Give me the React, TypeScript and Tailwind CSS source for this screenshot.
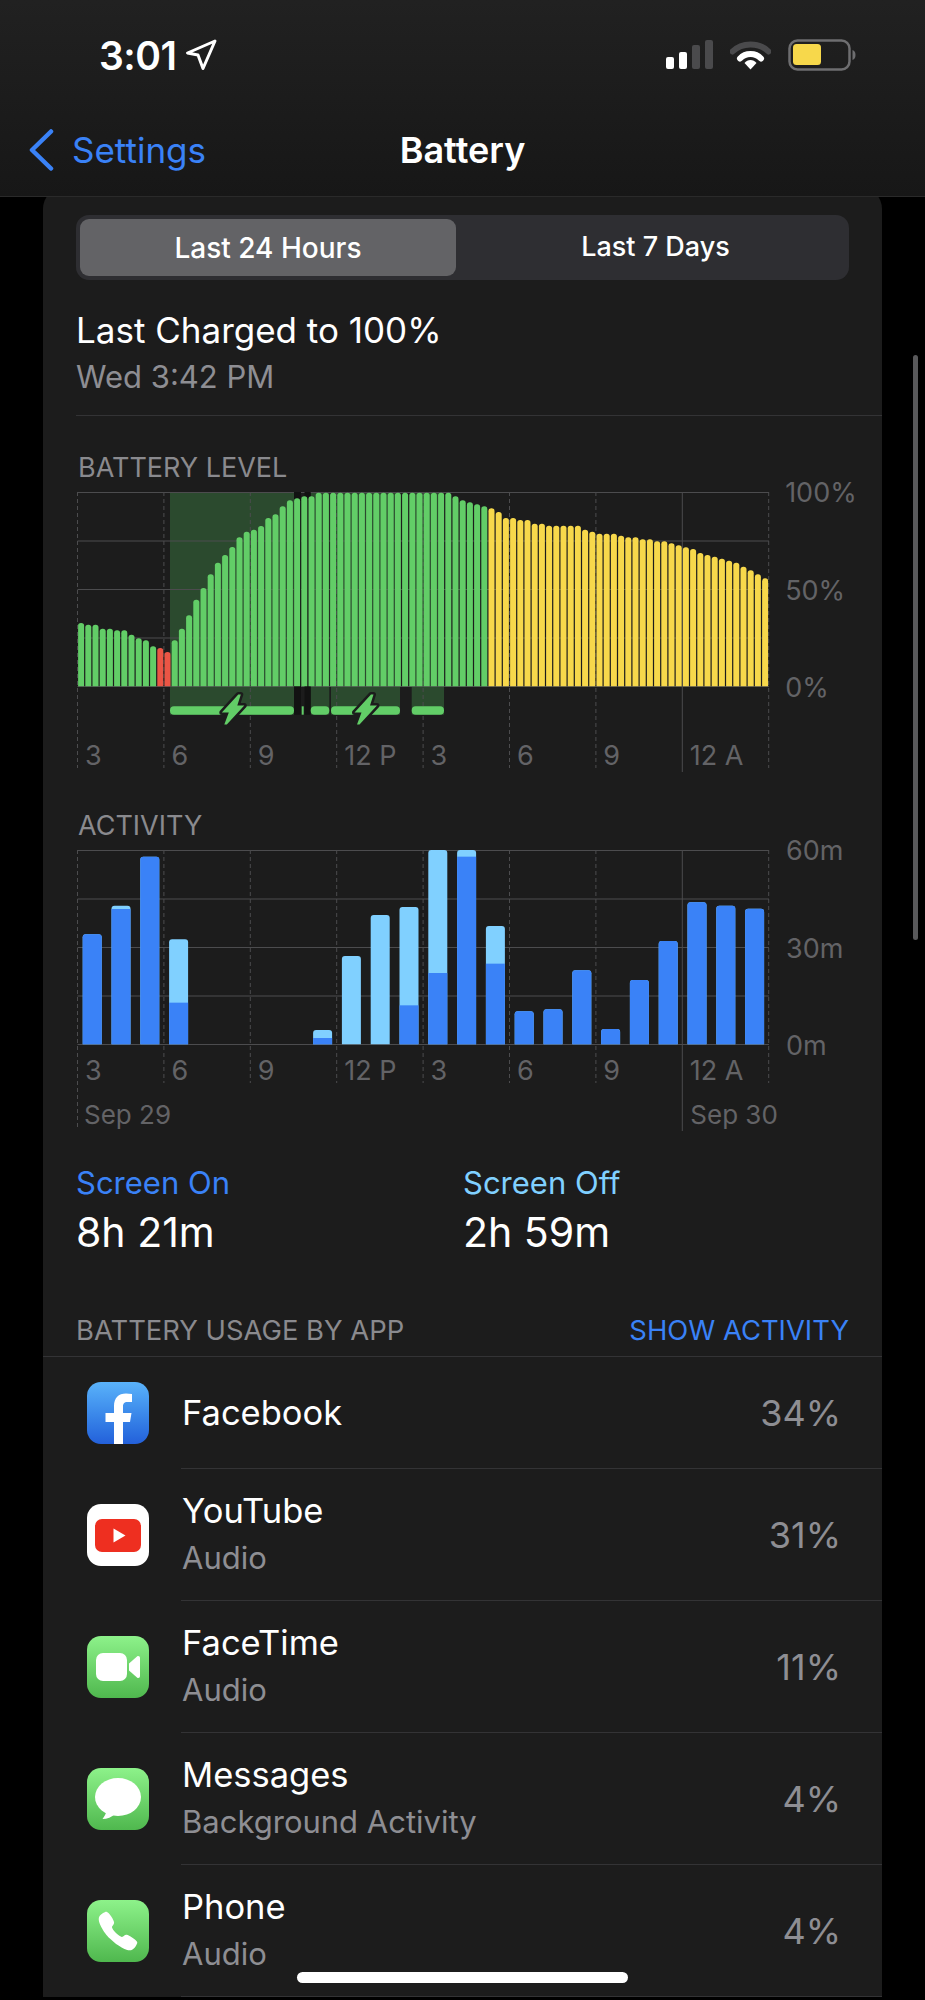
import { IoCall } from 'react-icons/io5';

const BATTERY_TOPS = [
  520, 525, 525, 537, 537, 542, 542, 555, 566, 572, 590, 595, 607, 572, 537, 497, 450, 415, 374, 339,
  316, 292, 263, 246, 240, 229, 205, 194, 170, 152, 146, 140, 140, 129, 129, 129, 129, 129, 129, 129,
  129, 129, 129, 129, 129, 129, 129, 129, 129, 129, 129, 129, 140, 152, 158, 164, 170, 176, 187, 205,
  205, 211, 211, 222, 222, 228, 228, 228, 228, 228, 240, 246, 252, 252, 252, 258, 263, 263, 269, 269,
  275, 275, 281, 287, 293, 298, 310, 316, 321, 327, 333, 339, 351, 362, 374, 386,
];

// [top of the bar, where the dark part starts], read off the chart
const ACTIVITY_BARS: ([number, number] | null)[] = [
  [373, 373], [287, 297], [140, 140], [388, 578], null, null, null, null, [660, 684], [438, 703], [315, 703], [291, 586],
  [120, 489], [120, 140], [348, 461], [604, 604], [598, 598], [481, 481], [657, 657], [510, 510], [393, 393], [277, 277], [287, 287], [296, 296],
];

const HOURS = ['3', '6', '9', '12 P', '3', '6', '9', '12 A'];
const SHADES = [[93, 217], [233.7, 252.3], [254, 323], [334.7, 367]];
const GRID_Y = [0.5, 49, 97.5, 146, 194.5];

const APPS = [
  { name: 'Facebook', pct: '34%', icon: <FacebookIcon /> },
  { name: 'YouTube', sub: 'Audio', pct: '31%', icon: <YouTubeIcon /> },
  { name: 'FaceTime', sub: 'Audio', pct: '11%', icon: <FaceTimeIcon /> },
  { name: 'Messages', sub: 'Background Activity', pct: '4%', icon: <MessagesIcon /> },
  { name: 'Phone', sub: 'Audio', pct: '4%', icon: <PhoneIcon /> },
];

function topRounded(x: number, w: number, top: number, base: number, r: number) {
  return `M${x} ${base}V${top + r}Q${x} ${top} ${x + r} ${top}H${x + w - r}Q${x + w} ${top} ${x + w} ${top + r}V${base}Z`;
}

function Grid({ dashTo, firstTo, solidTo }: { dashTo: number; firstTo: number; solidTo: number }) {
  return (
    <>
      {GRID_Y.map((y) => (
        <line key={y} x1="0.5" x2="692" y1={y} y2={y} stroke="#4c4c4e" strokeWidth="1" />
      ))}
      {[0, 1, 2, 3, 4, 5, 6, 7, 8].map((i) => (
        <line
          key={i}
          x1={0.5 + 86.4 * i}
          x2={0.5 + 86.4 * i}
          y1="0"
          y2={i === 0 ? firstTo : i === 7 ? solidTo : dashTo}
          stroke="#4c4c4e"
          strokeWidth="1"
          strokeDasharray={i === 7 ? undefined : '4 3'}
        />
      ))}
    </>
  );
}

function Bolt({ x, y }: { x: number; y: number }) {
  return (
    <path
      transform={`translate(${x} ${y})`}
      d="M6 -14.500H8.500L5 -3.500H12L-5.500 15.500H-8L-3.500 3.500H-10.500Z"
      fill="#62cd67"
      stroke="#1c1c1c"
      strokeWidth="5"
      strokeLinejoin="round"
      paintOrder="stroke"
    />
  );
}

function BatteryChart() {
  return (
    <svg className="absolute left-0 top-0" width="693" height="280" viewBox="0 0 693 280">
      {SHADES.map(([a, b]) => (
        <rect key={a} x={a} y="0" width={b - a} height="222.7" fill="#2b4a2e" />
      ))}
      <Grid dashTo={276} firstTo={276} solidTo={280} />
      <rect x="217" y="0" width="7" height="222.7" fill="#121212" />
      <rect x="227.5" y="0" width="6.2" height="222.7" fill="#121212" />
      {BATTERY_TOPS.map((t, i) => (
        <path
          key={i}
          d={topRounded(1.1 + 7.2 * i, 6, (t - 127) / 3, 194.3, 2.8)}
          fill={i === 11 || i === 12 ? '#eb5545' : i < 57 ? '#62cd67' : '#f7d84b'}
        />
      ))}
      <rect x="93" y="214.3" width="124" height="8.4" rx="4" fill="#62cd67" />
      <rect x="224.7" y="214.3" width="2" height="8.4" fill="#62cd67" />
      <rect x="233.7" y="214.3" width="18.6" height="8.4" rx="4" fill="#62cd67" />
      <rect x="254" y="214.3" width="69" height="8.4" rx="4" fill="#62cd67" />
      <rect x="334.7" y="214.3" width="32.3" height="8.4" rx="4" fill="#62cd67" />
      <Bolt x={155.3} y={217} />
      <Bolt x={288} y={217} />
    </svg>
  );
}

function ActivityChart() {
  return (
    <svg className="absolute left-0 top-0" width="693" height="281" viewBox="0 0 693 281">
      <Grid dashTo={233} firstTo={277} solidTo={281} />
      {ACTIVITY_BARS.map((b, i) => {
        if (!b) return null;
        const x = 5.7 + 28.8 * i;
        const top = (b[0] - 120) / 3;
        const split = (b[1] - 120) / 3;
        return (
          <g key={i}>
            <path d={topRounded(x, 19, top, 194.3, 3)} fill="#80d0ff" />
            {split < 194 &&
              (b[0] === b[1] ? (
                <path d={topRounded(x, 19, top, 194.3, 3)} fill="#3a82f7" />
              ) : (
                <rect x={x} y={split} width="19" height={194.3 - split} fill="#3a82f7" />
              ))}
          </g>
        );
      })}
    </svg>
  );
}

function HourRow() {
  return (
    <div className="relative flex h-[30px] text-[27px] leading-[30px] text-[#636366]">
      {HOURS.map((h, i) => (
        <div key={i} className="w-[86.4px] whitespace-nowrap pl-[8px]">
          {h}
        </div>
      ))}
    </div>
  );
}

function AxisLabels({ labels }: { labels: string[] }) {
  return (
    <div className="-mt-[14px] ml-[17px] flex h-[225px] flex-col justify-between text-[27px] leading-[30px] text-[#636366]">
      {labels.map((l) => (
        <div key={l}>{l}</div>
      ))}
    </div>
  );
}

function FacebookIcon() {
  return (
    <div className="h-[62px] w-[62px] overflow-hidden rounded-[14px] bg-gradient-to-b from-[#5ab2fa] to-[#2460da]">
      <svg width="62" height="62" viewBox="0 0 62 62">
        <path
          d="M27 62V40H18.500V31H27V24C27 16 31.500 11.500 39 11.500C41 11.500 43 11.700 45 12V20H40.500C37 20 36 21.800 36 24.500V31H44.500L43 40H36V62Z"
          fill="#fff"
        />
      </svg>
    </div>
  );
}

function YouTubeIcon() {
  return (
    <div className="flex h-[62px] w-[62px] items-center justify-center rounded-[14px] bg-white">
      <svg width="46" height="33" viewBox="0 0 46 33">
        <rect width="46" height="33" rx="7" fill="#ee2f20" />
        <path d="M18.500 9.500L30.500 16.500L18.500 23.500Z" fill="#fff" />
      </svg>
    </div>
  );
}

function FaceTimeIcon() {
  return (
    <div className="flex h-[62px] w-[62px] items-center justify-center rounded-[14px] bg-gradient-to-b from-[#8df28a] to-[#4fb84e]">
      <svg width="44" height="28" viewBox="0 0 44 28">
        <rect x="0" y="0" width="31" height="28" rx="7" fill="#fff" />
        <path d="M33 10.500L41 3.500C42.300 2.400 44 3.200 44 5V23C44 24.800 42.300 25.600 41 24.500L33 17.500Z" fill="#fff" />
      </svg>
    </div>
  );
}

function MessagesIcon() {
  return (
    <div className="flex h-[62px] w-[62px] items-center justify-center rounded-[14px] bg-gradient-to-b from-[#8df28a] to-[#4fb84e]">
      <svg width="46" height="42" viewBox="0 0 46 42">
        <ellipse cx="23" cy="19" rx="23" ry="19" fill="#fff" />
        <path d="M12 32C11 36 9 39 7.500 41C12 41 17 39 20 36Z" fill="#fff" />
      </svg>
    </div>
  );
}

function PhoneIcon() {
  return (
    <div className="flex h-[62px] w-[62px] items-center justify-center rounded-[14px] bg-gradient-to-b from-[#8df28a] to-[#4fb84e]">
      <IoCall size={44} color="#fff" />
    </div>
  );
}

function StatusIcons() {
  return (
    <div className="flex items-center">
      <svg width="47" height="30" viewBox="0 0 47 30">
        <rect x="0" y="17" width="8" height="12" rx="2" fill="#fff" />
        <rect x="13" y="12" width="8" height="17" rx="2" fill="#fff" />
        <rect x="26" y="5" width="8" height="24" rx="2" fill="#4a4a4c" />
        <rect x="39" y="0" width="8" height="29" rx="2" fill="#4a4a4c" />
      </svg>
      <svg className="ml-[17px]" width="41" height="30" viewBox="0 0 41 30">
        <path d="M2.500 11.500C12 2 29 2 38.500 11.500" fill="none" stroke="#4a4a4c" strokeWidth="6" strokeLinecap="round" />
        <path d="M10 18.500C15.500 12.500 25.500 12.500 31 18.500" fill="none" stroke="#fff" strokeWidth="6" strokeLinecap="round" />
        <path d="M14.500 23C17.500 19 23.500 19 26.500 23L20.500 29.500Z" fill="#fff" />
      </svg>
      <svg className="ml-[17px]" width="68" height="32" viewBox="0 0 68 32">
        <rect x="1.500" y="1.500" width="60" height="29" rx="8" fill="none" stroke="#6e6e70" strokeWidth="2.500" />
        <rect x="5" y="5" width="28" height="21" rx="3.500" fill="#f7d84b" />
        <path d="M64.500 11C66.500 11.500 67.500 13.500 67.500 16C67.500 18.500 66.500 20.500 64.500 21Z" fill="#6e6e70" />
      </svg>
    </div>
  );
}

export default function App() {
  return (
    <div className="relative h-[2000px] w-[925px] overflow-hidden bg-black font-['Inter',sans-serif] text-white">
      <div className="relative z-10 h-[197px] border-b border-[#2a2a2a] bg-gradient-to-b from-[#212121] to-[#171717]">
        <div className="flex h-[110px] items-center justify-between pl-[99px] pr-[69px]">
          <div className="flex items-center">
            <span className="text-[39px] font-semibold leading-none tracking-[-0.5px]">3:01</span>
            <svg className="ml-[9px]" width="32" height="32" viewBox="0 0 32 32">
              <path d="M30 2L2.500 14L13 16L18 29.500Z" fill="none" stroke="#fff" strokeWidth="3" strokeLinejoin="round" />
            </svg>
          </div>
          <StatusIcons />
        </div>
        <div className="grid h-[80px] grid-cols-[1fr_auto_1fr] items-center">
          <div className="flex items-center pl-[28px] text-[#3a82f7]">
            <svg width="26" height="42" viewBox="0 0 26 42">
              <path d="M23 2.500L4 21L23 39.500" fill="none" stroke="#3a82f7" strokeWidth="4.500" strokeLinecap="round" strokeLinejoin="round" />
            </svg>
            <span className="ml-[18px] text-[35px] leading-[40px]">Settings</span>
          </div>
          <div className="text-[36px] font-semibold leading-[40px]">Battery</div>
          <div />
        </div>
      </div>

      <div className="mx-[43px] -mt-[10px] rounded-t-[22px] bg-[#1c1c1c]">
        <div className="px-[33px] pt-[28px]">
          <div className="flex h-[65px] rounded-[13px] bg-[#2e2e32] p-[4px] text-[28px] font-medium">
            <div className="flex w-[376px] items-center justify-center rounded-[9px] bg-[#636366]">Last 24 Hours</div>
            <div className="flex flex-1 items-center justify-center pl-[10px] text-[27px]">Last 7 Days</div>
          </div>

          <div className="mt-[30px] text-[35px] leading-[40px]">Last Charged to 100%</div>
          <div className="mt-[7px] text-[31px] leading-[40px] text-[#8e8e93]">Wed 3:42 PM</div>
          <div className="-mr-[33px] mt-[18px] h-px bg-[#333335]" />

          <div className="ml-[2px] mt-[37px] text-[27px] leading-[30px] text-[#8a8a8e]">BATTERY LEVEL</div>
          <div className="ml-[1px] mt-[9px] flex">
            <div className="relative h-[280px] w-[692px] pt-[249px]">
              <BatteryChart />
              <HourRow />
            </div>
            <AxisLabels labels={['100%', '50%', '0%']} />
          </div>

          <div className="ml-[2px] mt-[39px] text-[27px] leading-[30px] text-[#8a8a8e]">ACTIVITY</div>
          <div className="ml-[1px] mt-[9px] flex">
            <div className="relative h-[281px] w-[692px] pt-[206px]">
              <ActivityChart />
              <HourRow />
              <div className="relative mt-[14px] flex text-[26px] leading-[30px] text-[#636366]">
                <div className="w-[605.300px] shrink-0 pl-[7px]">Sep 29</div>
                <div className="whitespace-nowrap pl-[8px]">Sep 30</div>
              </div>
            </div>
            <AxisLabels labels={['60m', '30m', '0m']} />
          </div>

          <div className="mt-[32px] flex">
            <div className="w-[387px]">
              <div className="text-[31px] leading-[40px] text-[#3a82f7]">Screen On</div>
              <div className="mt-[7px] text-[41px] leading-[44px]">8h 21m</div>
            </div>
            <div>
              <div className="text-[31px] leading-[40px] text-[#80d0ff]">Screen Off</div>
              <div className="mt-[7px] text-[41px] leading-[44px]">2h 59m</div>
            </div>
          </div>

          <div className="mt-[61px] flex justify-between text-[27.400px] leading-[30px]">
            <span className="text-[#8a8a8e]">BATTERY USAGE BY APP</span>
            <span className="text-[#3a82f7]">SHOW ACTIVITY</span>
          </div>
        </div>
        <div className="mt-[11px] h-px bg-[#333335]" />

        {APPS.map((app, i) => (
          <div key={app.name} className={`flex pl-[44px] ${i === 0 ? 'h-[112px]' : 'h-[132px]'}`}>
            <div className="flex items-center pr-[32px]">{app.icon}</div>
            <div className="flex flex-1 items-center justify-between border-b border-[#333335] pr-[41px]">
              <div>
                <div className="pl-[1px] text-[34.500px] leading-[40px]">{app.name}</div>
                {app.sub && <div className="mt-[7px] pl-[1px] text-[31px] leading-[40px] text-[#8e8e93]">{app.sub}</div>}
              </div>
              <div className="text-[36px] leading-[40px] text-[#8e8e93]">{app.pct}</div>
            </div>
          </div>
        ))}
      </div>

      <div className="absolute left-[913px] top-[355px] z-20 h-[585px] w-[5px] rounded-full bg-[#59595b]" />
      <div className="absolute left-[297px] top-[1972px] z-20 h-[11px] w-[331px] rounded-full bg-white" />
    </div>
  );
}
